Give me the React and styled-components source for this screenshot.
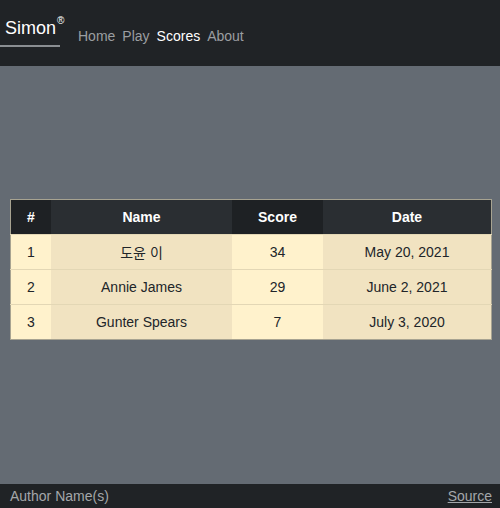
import React from 'react'
import styled, { createGlobalStyle } from 'styled-components'

const GlobalStyle = createGlobalStyle`
    html, body {
        margin: 0;
        padding: 0;
        height: 100%;
    }
    body {
        font-family: "Liberation Sans", Arial, "Noto Sans CJK KR", sans-serif;
        background: #646b73;
    }
    #root {
        height: 100%;
    }
`

const Page = styled.div`
    height: 508px;
    display: flex;
    flex-direction: column;
    background: #646b73;
`

const Header = styled.header`
    height: 66px;
    background: #202326;
    display: flex;
    align-items: flex-start;
`

const Brand = styled.div`
    width: 60px;
    height: 47px;
    border-bottom: 2px solid #8a8e92;
    padding-left: 5px;
    box-sizing: border-box;
    display: flex;
    align-items: flex-end;
    padding-bottom: 8px;
    color: #fff;
    font-size: 18px;
    line-height: 1;
    sup {
        font-size: 10px;
        line-height: 1;
        margin-left: 1px;
        align-self: flex-start;
        margin-top: 16px;
    }
`

const Nav = styled.nav`
    display: flex;
    gap: 7px;
    margin-left: 18px;
    margin-top: 28px;
`

const NavLink = styled.a`
    font-size: 14px;
    color: ${p => (p.active ? '#ffffff' : '#9b9ea1')};
    text-decoration: none;
`

const Main = styled.main`
    flex: 1;
    display: flex;
    flex-direction: column;
    justify-content: center;
    padding: 0 8px 12px 10px;
`

const Table = styled.table`
    width: 100%;
    border-collapse: collapse;
    border: 1px solid #a7a391;
    font-size: 14px;
    text-align: center;
    color: #212529;
`

const Th = styled.th`
    height: 34px;
    padding: 0;
    color: #fff;
    font-weight: bold;
    background: ${p => (p.odd ? '#1e2124' : '#2a2e32')};
    width: ${p => p.w}px;
`

const Td = styled.td`
    height: 34px;
    padding: 0;
    border-top: 1px solid #e3d7b5;
    background: ${p => (p.odd ? '#fff2cc' : '#f1e3c1')};
`

const Footer = styled.footer`
    height: 24px;
    background: #202326;
    display: flex;
    align-items: center;
    justify-content: space-between;
    padding: 0 8px 0 10px;
    font-size: 14px;
    color: #a4a7aa;
    a {
        color: #a4a7aa;
        text-decoration: underline;
    }
`

const scores = [
    { n: 1, name: '도윤 이', score: 34, date: 'May 20, 2021' },
    { n: 2, name: 'Annie James', score: 29, date: 'June 2, 2021' },
    { n: 3, name: 'Gunter Spears', score: 7, date: 'July 3, 2020' },
]

export default function App() {
    return (
        <Page>
            <GlobalStyle />
            <Header>
                <Brand>Simon<sup>®</sup></Brand>
                <Nav>
                    <NavLink href='#'>Home</NavLink>
                    <NavLink href='#'>Play</NavLink>
                    <NavLink href='#' active>Scores</NavLink>
                    <NavLink href='#'>About</NavLink>
                </Nav>
            </Header>
            <Main>
                <Table>
                    <thead>
                        <tr>
                            <Th odd w={40}>#</Th>
                            <Th w={181}>Name</Th>
                            <Th odd w={91}>Score</Th>
                            <Th>Date</Th>
                        </tr>
                    </thead>
                    <tbody>
                        {scores.map(s => (
                            <tr key={s.n}>
                                <Td odd>{s.n}</Td>
                                <Td>{s.name}</Td>
                                <Td odd>{s.score}</Td>
                                <Td>{s.date}</Td>
                            </tr>
                        ))}
                    </tbody>
                </Table>
            </Main>
            <Footer>
                <span>Author Name(s)</span>
                <a href='#'>Source</a>
            </Footer>
        </Page>
    )
}
